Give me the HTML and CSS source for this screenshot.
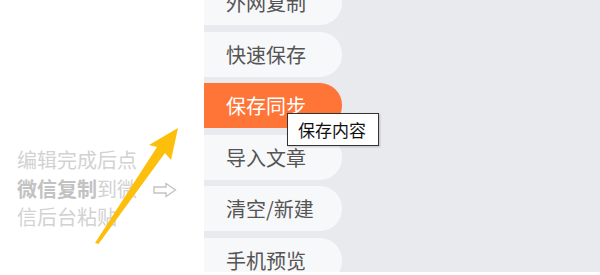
FILE: index.html
```html
<!DOCTYPE html>
<html lang="zh-CN">
<head>
<meta charset="utf-8">
<title>保存同步</title>
<link rel="stylesheet" href="styles.css">
</head>
<body>
<div class="page">
  <div class="hint-col">
    <div class="hint">
      <div class="hint-text">编辑完成后点<br><b>微信复制</b>到微<br>信后台粘贴</div>
      <svg class="hint-arrow" width="24" height="16" viewBox="0 0 24 16">
        <path d="M1 5 H13 V1.5 L22.5 8 L13 14.5 V11 H1 Z" fill="none" stroke="#c4c4c4" stroke-width="1.4" stroke-linejoin="miter"/>
      </svg>
    </div>
  </div>
  <div class="panel">
    <div class="menu">
      <div class="item">外网复制</div>
      <div class="item">快速保存</div>
      <div class="item active">保存同步<div class="tooltip">保存内容</div></div>
      <div class="item">导入文章</div>
      <div class="item">清空/新建</div>
      <div class="item">手机预览</div>
    </div>
  </div>
  <svg class="pointer" width="600" height="275" viewBox="0 0 600 275">
    <polygon points="95,243 157,147 149,145 178,128 171,160 165,153 98.5,244" fill="#fcbf0c"/>
  </svg>
</div>
</body>
</html>
```
FILE: styles.css
```css
html, body {
  margin: 0;
  padding: 0;
  background: #ffffff;
}
body {
  font-family: "Noto Sans CJK SC", "Noto Sans", sans-serif;
  width: 600px;
  height: 275px;
  overflow: hidden;
}
.page {
  position: relative;
  display: flex;
  width: 600px;
  height: 275px;
}
.hint-col {
  width: 204px;
  flex: none;
  padding: 146px 0 0 17px;
  box-sizing: border-box;
}
.hint {
  display: flex;
  align-items: center;
  gap: 16px;
}
.hint-text {
  font-size: 20px;
  line-height: 28.5px;
  color: #d2d2d2;
  white-space: nowrap;
}
.hint-text b {
  color: #c2c2c2;
  font-weight: bold;
}
.hint-arrow {
  display: block;
  flex: none;
  margin-top: 2px;
}
.panel {
  flex: 1;
  height: 272px;
  background: #e8eaed;
  overflow: hidden;
}
.menu {
  display: flex;
  flex-direction: column;
  gap: 6.5px;
  margin-top: -20px;
}
.item {
  position: relative;
  width: 138px;
  height: 45px;
  box-sizing: border-box;
  padding-left: 22px;
  display: flex;
  align-items: center;
  background: #f7f8f9;
  border-radius: 0 22px 22px 0;
  font-size: 20px;
  color: #555555;
  white-space: nowrap;
}
.item.active {
  background: #ff7538;
  color: #ffffff;
}
.tooltip {
  position: absolute;
  left: 83px;
  top: 30px;
  width: 92px;
  height: 33px;
  box-sizing: border-box;
  padding-left: 10px;
  display: flex;
  align-items: center;
  background: #ffffff;
  border: 1px solid #333333;
  box-shadow: 1px 1px 2px rgba(0, 0, 0, 0.2);
  font-size: 17px;
  color: #111111;
  z-index: 2;
}
.pointer {
  position: absolute;
  left: 0;
  top: 0;
  pointer-events: none;
}
```
